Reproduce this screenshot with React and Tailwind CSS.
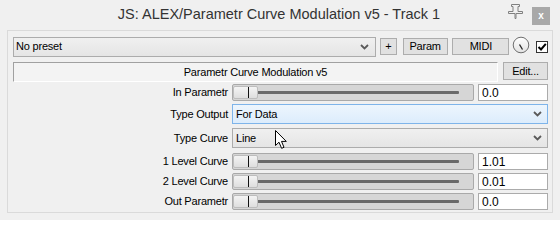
import React from "react";

const font = { fontFamily: '"Liberation Sans", Arial, sans-serif' };

function Chevron() {
  return (
    <svg width="9" height="6" viewBox="0 0 9 6" className="shrink-0">
      <path d="M1 1 L4.5 4.5 L8 1" fill="none" stroke="#5a5a5a" strokeWidth="1.8" />
    </svg>
  );
}

function Slider() {
  return (
    <div className="flex items-center w-[242px] h-[17px] bg-[#d6d6d6] border border-[#a9a9a9] rounded-[2px] pr-[14px] pl-[0px]">
      <div className="relative flex justify-center items-center w-[25px] h-[13px] shrink-0 rounded-[2px] border border-[#bdbdbd] bg-gradient-to-b from-[#f4f4f4] to-[#dedede] z-10">
        <div className="w-[1px] h-[11px] bg-[#111] ml-[6px]" />
      </div>
      <div className="flex-1 h-[3px] bg-[#6a6a6a] rounded-[1px] -ml-[2px]" />
    </div>
  );
}

function TextBox({ value }) {
  return (
    <div className="w-[70px] h-[17px] bg-white border border-[#ababab] flex items-center pl-[3px] text-[12px] text-black">
      {value}
    </div>
  );
}

function Label({ children }) {
  return (
    <div className="w-[219px] shrink-0 text-right pr-[4px] text-[11px] tracking-[-0.2px] text-black leading-none">
      {children}
    </div>
  );
}

function SliderRow({ label, value, mt }) {
  return (
    <div className={`flex items-center h-[17px] ${mt}`}>
      <Label>{label}</Label>
      <Slider />
      <div className="w-[4px]" />
      <TextBox value={value} />
    </div>
  );
}

function DropRow({ label, value, active, mt }) {
  return (
    <div className={`flex items-center h-[20px] ${mt}`}>
      <Label>{label}</Label>
      <div
        className={
          active
            ? "w-[316px] h-[20px] border border-[#7eb4ea] bg-gradient-to-b from-[#edf5fd] to-[#dcecfc] flex items-center justify-between pl-[3px] pr-[5px] text-[11px] tracking-[-0.2px]"
            : "w-[316px] h-[20px] border border-[#acacac] bg-gradient-to-b from-[#f0f0f0] to-[#e5e5e5] flex items-center justify-between pl-[3px] pr-[5px] text-[11px] tracking-[-0.2px]"
        }
      >
        <span>{value}</span>
        <Chevron />
      </div>
    </div>
  );
}

function Btn({ w, children, h = "h-[17px]" }) {
  return (
    <div className={`${w} ${h} shrink-0 border border-[#adadad] bg-[#e1e1e1] flex items-center justify-center text-[11px] tracking-[-0.2px] text-black`}>
      {children}
    </div>
  );
}

export default function App() {
  return (
    <div className="relative w-[560px] h-[220px] bg-[#f0f0f0] overflow-hidden text-black" style={font}>
      {/* Title bar */}
      <div className="relative h-[30px] flex items-center justify-center">
        <div className="text-[14.5px] text-[#333] -mt-[1px] -ml-[2px]">JS: ALEX/Parametr Curve Modulation v5 - Track 1</div>
        <div className="absolute left-[507px] top-[4px]">
          <svg width="17" height="15" viewBox="0 0 17 15">
            <path
              d="M4.5 0.5 H12.5 V2.5 H11 V7.5 H15.5 V9.5 H9 V14.5 H8 V9.5 H1.5 V7.5 H6 V2.5 H4.5 Z"
              fill="#f0f0f0"
              stroke="#808080"
              strokeWidth="1"
            />
          </svg>
        </div>
        <div className="absolute left-[532px] top-[7px] w-[18px] h-[18px] bg-[#a8a8a8] flex items-center justify-center text-white text-[10px] font-bold leading-none pb-[1px]">
          x
        </div>
      </div>

      {/* Panel */}
      <div className="mx-[7px] h-[183px] border border-[#dadada] pl-[5px] pr-[4px] pt-[5px] flex flex-col">
        {/* Row 1 */}
        <div className="flex items-center h-[21px]">
          <div className="w-[363px] h-[20px] shrink-0 border border-[#acacac] bg-gradient-to-b from-[#f0f0f0] to-[#e5e5e5] flex items-center justify-between pl-[2px] pr-[6px] text-[11px] tracking-[-0.2px]">
            <span>No preset</span>
            <Chevron />
          </div>
          <div className="w-[4px]" />
          <Btn w="w-[17px]">+</Btn>
          <div className="w-[6px]" />
          <Btn w="w-[45px]">Param</Btn>
          <div className="w-[5px]" />
          <Btn w="w-[57px]">MIDI</Btn>
          <div className="w-[3px]" />
          <svg width="18" height="18" viewBox="0 0 18 18" className="shrink-0 -mt-[3px]">
            <defs>
              <linearGradient id="kg" x1="0" y1="0" x2="0" y2="1">
                <stop offset="0" stopColor="#ffffff" />
                <stop offset="1" stopColor="#e2e2e2" />
              </linearGradient>
            </defs>
            <circle cx="9" cy="9" r="7.8" fill="url(#kg)" stroke="#6e6e6e" strokeWidth="1" />
            <line x1="7.5" y1="8.5" x2="10.5" y2="13.5" stroke="#222" strokeWidth="1.3" />
          </svg>
          <div className="w-[6px]" />
          <div className="w-[12px] h-[12px] shrink-0 border border-[#333] bg-white flex items-center justify-center">
            <svg width="10" height="10" viewBox="0 0 10 10">
              <path d="M1.5 5 L4 7.5 L8.8 1.8" fill="none" stroke="#000" strokeWidth="2" />
            </svg>
          </div>
        </div>

        {/* Row 2 */}
        <div className="flex items-start mt-[5px] h-[20px]">
          <div className="w-[485px] h-[20px] shrink-0 border-t border-l border-[#a0a0a0] border-b-white border-r-white border-b border-r bg-[#f3f3f3] flex items-center justify-center text-[11px] tracking-[-0.2px]">
            Parametr Curve Modulation v5
          </div>
          <div className="w-[5px]" />
          <Btn w="w-[45px]" h="h-[18px]">Edit...</Btn>
        </div>

        <SliderRow label="In Parametr" value="0.0" mt="mt-[2px]" />
        <DropRow label="Type Output" value="For Data" active mt="mt-[3px]" />
        <DropRow label="Type Curve" value="Line" mt="mt-[4px]" />
        <SliderRow label="1 Level Curve" value="1.01" mt="mt-[5px]" />
        <SliderRow label="2 Level Curve" value="0.01" mt="mt-[3px]" />
        <SliderRow label="Out Parametr" value="0.0" mt="mt-[3px]" />
      </div>

      {/* Mouse cursor */}
      <svg className="absolute left-[275px] top-[130px]" width="13" height="20" viewBox="0 0 13 20">
        <path
          d="M0.5 0.5 L0.5 15.5 L4 12.2 L6.6 18.3 L9 17.3 L6.5 11.4 L11.3 11.4 Z"
          fill="#fff"
          stroke="#000"
          strokeWidth="1"
          strokeLinejoin="miter"
        />
      </svg>
    </div>
  );
}
